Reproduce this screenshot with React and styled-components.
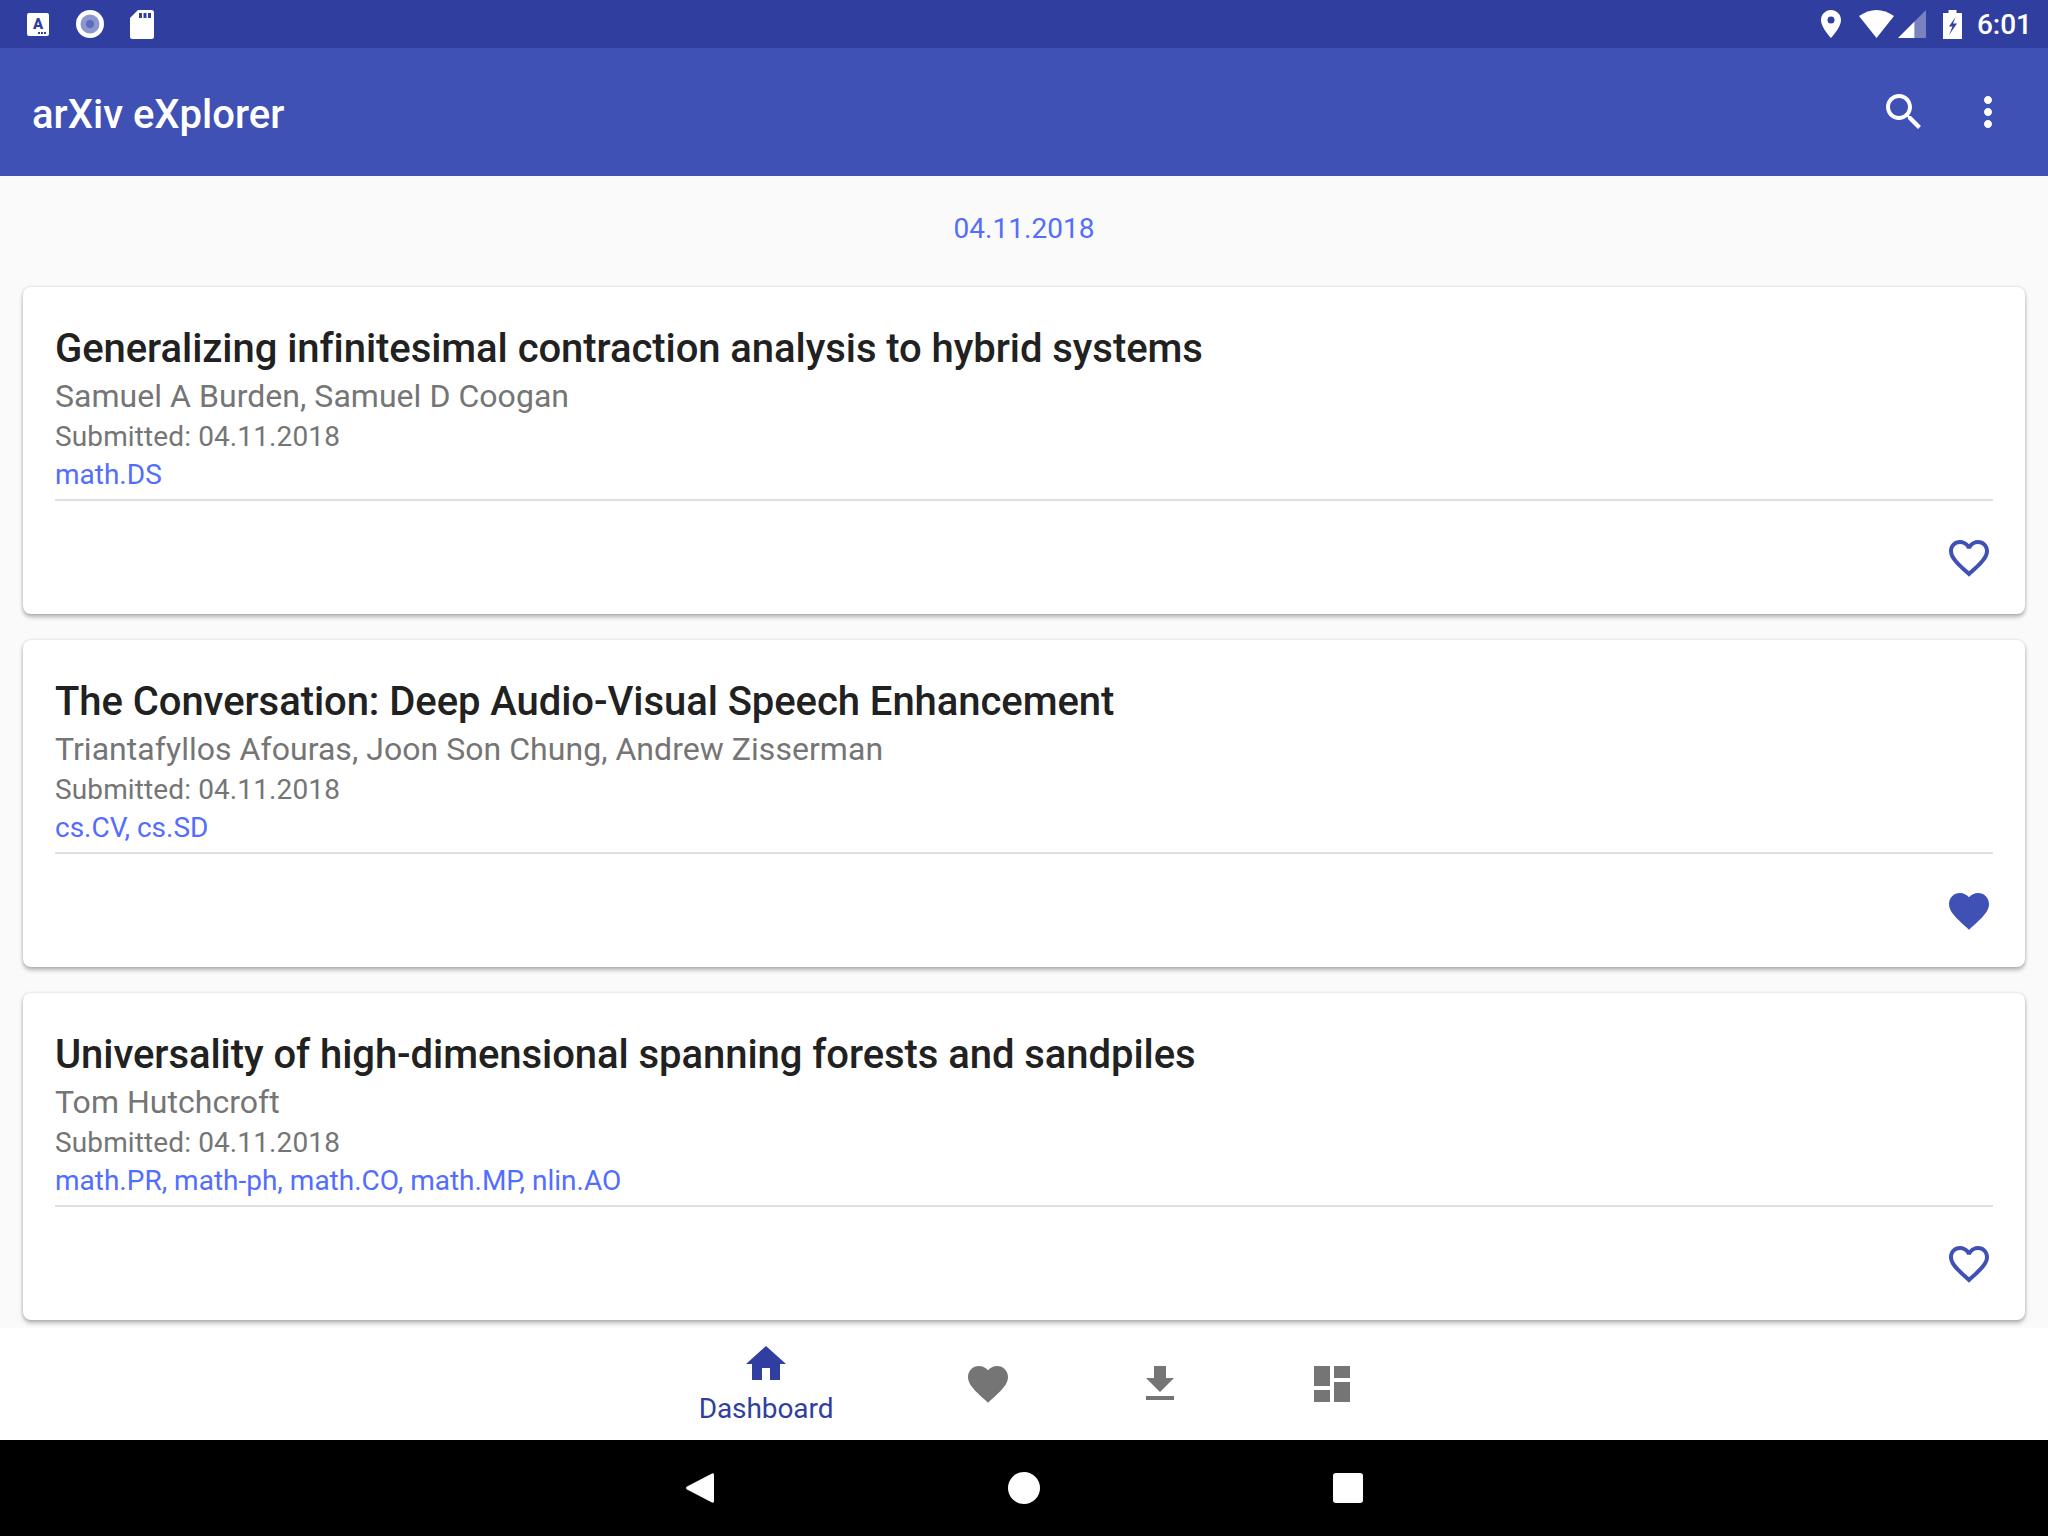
import React from 'react';
import styled, { createGlobalStyle } from 'styled-components';

const GlobalStyle = createGlobalStyle`
  html, body {
    margin: 0;
    padding: 0;
    background: #fafafa;
  }
  * {
    box-sizing: border-box;
  }
`;

const Screen = styled.div`
  width: 2048px;
  height: 1536px;
  display: flex;
  flex-direction: column;
  overflow: hidden;
  font-family: Roboto, "Liberation Sans", sans-serif;
  background: #fafafa;
`;

const StatusBar = styled.div`
  height: 48px;
  flex: none;
  display: flex;
  align-items: center;
  justify-content: space-between;
  padding: 0 16px 0 27px;
  background: #303f9f;
  color: #fff;
`;

const StatusGroup = styled.div`
  display: flex;
  align-items: center;
`;

const StatusIcon = styled.svg`
  display: block;
  flex: none;
  margin-left: ${(p) => p.$gap || 0}px;
`;

const Time = styled.span`
  margin-left: 15px;
  font-size: 28px;
  font-weight: 500;
  line-height: 33px;
`;

const AppBar = styled.header`
  height: 128px;
  flex: none;
  display: flex;
  align-items: center;
  justify-content: space-between;
  padding: 0 36px 0 32px;
  background: #3f51b5;
`;

const AppTitle = styled.h1`
  margin: 0;
  padding-top: 5px;
  font-size: 40px;
  font-weight: 500;
  color: #fff;
`;

const AppActions = styled.div`
  display: flex;
  gap: 36px;
`;

const Glyph = styled.svg`
  display: block;
  flex: none;
  width: 48px;
  height: 48px;
  fill: ${(p) => p.$color};
`;

const Feed = styled.main`
  flex: 1;
  min-height: 0;
  overflow: hidden;
  padding: 0 23px;
`;

const DateHeading = styled.div`
  height: 111px;
  padding-top: 36px;
  font-size: 28px;
  line-height: 33px;
  letter-spacing: 0.05px;
  text-align: center;
  color: #536dfe;
`;

const Card = styled.article`
  height: 327px;
  margin-bottom: 26px;
  padding: 38px 32px 32px;
  display: flex;
  flex-direction: column;
  border-radius: 8px;
  background: #fff;
  box-shadow: 0 3px 4px rgba(0, 0, 0, 0.28), 0 0 3px rgba(0, 0, 0, 0.14);
`;

const CardTitle = styled.h2`
  margin: 0;
  font-size: 40px;
  font-weight: 500;
  line-height: 47px;
  letter-spacing: -0.06px;
  color: #212121;
`;

const Authors = styled.div`
  margin-top: 5px;
  font-size: 32px;
  line-height: 38px;
  letter-spacing: 0.04px;
  color: #757575;
`;

const Submitted = styled.div`
  margin-top: 5px;
  font-size: 28px;
  line-height: 33px;
  letter-spacing: 0.12px;
  color: #757575;
`;

const Categories = styled.div`
  margin-top: 5px;
  font-size: 28px;
  line-height: 33px;
  color: #536dfe;
`;

const Divider = styled.hr`
  width: 100%;
  height: 2px;
  margin: 8px 0 0;
  border: none;
  background: #e0e0e0;
`;

const CardFooter = styled.div`
  margin-top: auto;
  display: flex;
  justify-content: flex-end;
`;

const BottomNav = styled.nav`
  position: relative;
  height: 112px;
  flex: none;
  display: flex;
  justify-content: center;
  background: #fff;
`;

const NavItem = styled.div`
  width: ${(p) => (p.$active ? 272 : 172)}px;
  display: flex;
  flex-direction: column;
  align-items: center;
  justify-content: ${(p) => (p.$active ? 'flex-start' : 'center')};
  padding-top: ${(p) => (p.$active ? 12 : 0)}px;
`;

const NavLabel = styled.span`
  margin-top: 4px;
  font-size: 28px;
  line-height: 33px;
  letter-spacing: -0.08px;
  color: #303f9f;
`;

const SystemBar = styled.div`
  height: 96px;
  flex: none;
  display: flex;
  align-items: center;
  justify-content: center;
  background: #000;
`;

const SystemKey = styled.div`
  width: 324px;
  display: flex;
  justify-content: center;
`;

const HomeKey = styled.div`
  width: 32px;
  height: 32px;
  border-radius: 50%;
  background: #fff;
`;

const RecentKey = styled.div`
  width: 30px;
  height: 30px;
  border-radius: 3px;
  background: #fff;
`;

const HEART = 'M12 21.35l-1.45-1.32C5.4 15.36 2 12.28 2 8.5 2 5.42 4.42 3 7.5 3c1.74 0 3.41.81 4.5 2.09C13.09 3.81 14.76 3 16.5 3 19.58 3 22 5.42 22 8.5c0 3.78-3.4 6.86-8.55 11.54L12 21.35z';
const HEART_BORDER = 'M16.5 3c-1.74 0-3.41.81-4.5 2.09C10.91 3.81 9.24 3 7.5 3 4.42 3 2 5.42 2 8.5c0 3.78 3.4 6.86 8.55 11.54L12 21.35l1.45-1.32C18.6 15.36 22 12.28 22 8.5 22 5.42 19.58 3 16.5 3zm-4.4 15.55l-.1.1-.1-.1C7.14 14.24 4 11.39 4 8.5 4 6.5 5.5 5 7.5 5c1.54 0 3.04.99 3.57 2.36h1.87C13.46 5.99 14.96 5 16.5 5c2 0 3.5 1.5 3.5 3.5 0 2.89-3.14 5.74-7.9 10.05z';

const Icon = ({ d, color }) => (
  <Glyph viewBox="0 0 24 24" $color={color}>
    <path d={d} />
  </Glyph>
);

const papers = [
  {
    title: 'Generalizing infinitesimal contraction analysis to hybrid systems',
    authors: 'Samuel A Burden, Samuel D Coogan',
    categories: 'math.DS',
    liked: false,
  },
  {
    title: 'The Conversation: Deep Audio-Visual Speech Enhancement',
    authors: 'Triantafyllos Afouras, Joon Son Chung, Andrew Zisserman',
    categories: 'cs.CV, cs.SD',
    liked: true,
  },
  {
    title: 'Universality of high-dimensional spanning forests and sandpiles',
    authors: 'Tom Hutchcroft',
    categories: 'math.PR, math-ph, math.CO, math.MP, nlin.AO',
    liked: false,
  },
];

function Status() {
  return (
    <StatusBar>
      <StatusGroup>
        <StatusIcon width="22" height="23" viewBox="0 0 22 23">
          <rect width="22" height="23" rx="2" fill="#fff" />
          <text x="11" y="16" textAnchor="middle" fontFamily="Roboto, sans-serif" fontSize="15" fontWeight="900" fill="#303f9f">A</text>
          <path d="M11 19h2v2h-2zM14 19h2v2h-2zM17 19h2v2h-2z" fill="#303f9f" />
        </StatusIcon>
        <StatusIcon $gap={27} width="28" height="28" viewBox="0 0 28 28">
          <circle cx="14" cy="14" r="14" fill="#fff" />
          <circle cx="14" cy="14" r="9.5" fill="#8c97d0" />
          <circle cx="14" cy="14" r="4" fill="#5c6bc0" />
        </StatusIcon>
        <StatusIcon $gap={26} width="24" height="29" viewBox="0 0 24 29">
          <path d="M8 0H21.5A2.5 2.5 0 0 1 24 2.5V26.5A2.5 2.5 0 0 1 21.5 29H2.5A2.5 2.5 0 0 1 0 26.5V8Z" fill="#fff" />
          <path d="M9 3h3v5H9zM13.5 3h3v5h-3zM18 3h3v5h-3z" fill="#303f9f" />
        </StatusIcon>
      </StatusGroup>
      <StatusGroup>
        <StatusIcon width="20" height="28" viewBox="0 0 20 28">
          <path fillRule="evenodd" fill="#fff" d="M10 0C4.5 0 0 4.4 0 10c0 7.500 10 18 10 18s10-10.500 10-18C20 4.400 15.500 0 10 0Zm0 6.500a3.500 3.500 0 1 1 0 7 3.500 3.500 0 0 1 0-7Z" />
        </StatusIcon>
        <StatusIcon $gap={18} width="35" height="28" viewBox="0 0 35 28">
          <path d="M0 6Q17.500-6 35 6L17.500 28Z" fill="#fff" />
        </StatusIcon>
        <StatusIcon $gap={4} width="28" height="28" viewBox="0 0 28 28">
          <path d="M0 28 16.500 11.500V28Z" fill="#fff" />
          <path d="M16.500 11.500 28 0V28H16.500Z" fill="#fff" fillOpacity="0.35" />
        </StatusIcon>
        <StatusIcon $gap={17} width="19" height="29" viewBox="0 0 19 29">
          <path d="M5.500 0h8v3H19V29H0V3H5.500Z" fill="#fff" />
          <path d="M12.500 7 6 16.500h3.500L6 25l8-11.500h-4Z" fill="#303f9f" />
        </StatusIcon>
        <Time>6:01</Time>
      </StatusGroup>
    </StatusBar>
  );
}

function PaperCard({ paper }) {
  return (
    <Card>
      <CardTitle>{paper.title}</CardTitle>
      <Authors>{paper.authors}</Authors>
      <Submitted>Submitted: 04.11.2018</Submitted>
      <Categories>{paper.categories}</Categories>
      <Divider />
      <CardFooter>
        <Icon d={paper.liked ? HEART : HEART_BORDER} color="#3f51b5" />
      </CardFooter>
    </Card>
  );
}

export default function App() {
  return (
    <Screen>
      <GlobalStyle />
      <Status />
      <AppBar>
        <AppTitle>arXiv eXplorer</AppTitle>
        <AppActions>
          <Icon color="#fff" d="M15.500 14h-.79l-.28-.27C15.410 12.590 16 11.110 16 9.500 16 5.910 13.090 3 9.500 3S3 5.910 3 9.500 5.910 16 9.500 16c1.610 0 3.090-.59 4.230-1.570l.27.28v.79l5 4.990L20.490 19l-4.990-5zm-6 0C7.010 14 5 11.990 5 9.500S7.010 5 9.500 5 14 7.010 14 9.500 11.990 14 9.500 14z" />
          <Icon color="#fff" d="M12 8c1.100 0 2-.9 2-2s-.9-2-2-2-2 .9-2 2 .9 2 2 2zm0 2c-1.100 0-2 .9-2 2s.9 2 2 2 2-.9 2-2-.9-2-2-2zm0 6c-1.100 0-2 .9-2 2s.9 2 2 2 2-.9 2-2-.9-2-2-2z" />
        </AppActions>
      </AppBar>
      <Feed>
        <DateHeading>04.11.2018</DateHeading>
        {papers.map((paper) => (
          <PaperCard key={paper.title} paper={paper} />
        ))}
      </Feed>
      <BottomNav>
        <NavItem $active>
          <Icon color="#303f9f" d="M10 20v-6h4v6h5v-8h3L12 3 2 12h3v8z" />
          <NavLabel>Dashboard</NavLabel>
        </NavItem>
        <NavItem>
          <Icon color="#757575" d={HEART} />
        </NavItem>
        <NavItem>
          <Icon color="#757575" d="M19 9h-4V3H9v6H5l7 7 7-7zM5 18v2h14v-2H5z" />
        </NavItem>
        <NavItem>
          <Icon color="#757575" d="M3 13h8V3H3v10zm0 8h8v-6H3v6zm10 0h8V11h-8v10zm0-18v6h8V3h-8z" />
        </NavItem>
      </BottomNav>
      <SystemBar>
        <SystemKey>
          <svg width="28" height="32" viewBox="0 0 28 32">
            <path d="M26 1.500a1.500 1.500 0 0 1 2 1.300V29.200a1.500 1.500 0 0 1-2 1.300L1 17.500a1.700 1.700 0 0 1 0-3Z" fill="#fff" />
          </svg>
        </SystemKey>
        <SystemKey>
          <HomeKey />
        </SystemKey>
        <SystemKey>
          <RecentKey />
        </SystemKey>
      </SystemBar>
    </Screen>
  );
}
